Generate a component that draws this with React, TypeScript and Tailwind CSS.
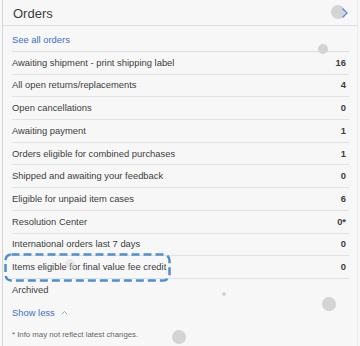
import React from "react";

const ROWS: { label: string; value: string }[] = [
  { label: "Awaiting shipment - print shipping label", value: "16" },
  { label: "All open returns/replacements", value: "4" },
  { label: "Open cancellations", value: "0" },
  { label: "Awaiting payment", value: "1" },
  { label: "Orders eligible for combined purchases", value: "1" },
  { label: "Shipped and awaiting your feedback", value: "0" },
  { label: "Eligible for unpaid item cases", value: "6" },
  { label: "Resolution Center", value: "0*" },
  { label: "International orders last 7 days", value: "0" },
  { label: "Items eligible for final value fee credit", value: "0" },
];

const Dot = ({ className }: { className: string }) => (
  <div className={`absolute rounded-full bg-[#d4d4d6] ${className}`} />
);

const App = () => {
  return (
    <div className="bg-[#f7f7f7] w-[360px] h-[346px] pl-[2px] pr-[2px]">
      <div
        className="relative h-full overflow-hidden border-l border-r border-l-[#d6d6d6] border-r-[#ececec] text-[#3d3d3d]"
        style={{ fontFamily: '"Liberation Sans", Arial, sans-serif' }}
      >
        <div className="flex items-center justify-between h-[26px] pl-[10px] pr-[8px] border-b border-[#dedede]">
          <h2 className="text-[13px] leading-none pt-[1px]">Orders</h2>
          <svg width="8" height="12" viewBox="0 0 8 12" className="relative z-10">
            <path d="M1.5 1.5 L6 6 L1.5 10.5" fill="none" stroke="#5b8fd1" strokeWidth="1.4" />
          </svg>
        </div>

        <div className="pl-[9px] pr-[8px]">
          <div className="h-[26px] flex items-center border-b border-[#dedede] pt-[3px]">
            <a className="text-[9.4px] text-[#3c6fc4]">See all orders</a>
          </div>

          {ROWS.map((row, index) => (
            <div
              key={index}
              className="h-[22.7px] flex items-center justify-between border-b border-[#e2e2e2] text-[9.4px]"
            >
              <span>{row.label}</span>
              <span className="font-bold pr-[3px]">{row.value}</span>
            </div>
          ))}

          <div className="h-[23px] flex items-center text-[9.4px]">Archived</div>

          <div className="h-[22px] flex items-center gap-[6px] text-[9.4px] text-[#3c6fc4]">
            <span>Show less</span>
            <svg width="7" height="5" viewBox="0 0 7 5">
              <path d="M1 4 L3.5 1.5 L6 4" fill="none" stroke="#9aa8c0" strokeWidth="1" />
            </svg>
          </div>

          <div className="h-[20px] flex items-center pt-[2px] text-[7.8px] text-[#666]">
            * Info may not reflect latest changes.
          </div>
        </div>

        {/* annotation around the row */}
        <svg className="absolute left-[1px] top-[253px]" width="167" height="29" viewBox="0 0 167 29">
          <rect
            x="1.5"
            y="1.5"
            width="164"
            height="26"
            rx="6"
            fill="none"
            stroke="#4d8fd4"
            strokeWidth="2.5"
            strokeDasharray="8 4"
          />
        </svg>

        <Dot className="left-[328px] top-[5px] w-[14px] h-[14px]" />
        <Dot className="left-[315px] top-[44px] w-[10px] h-[10px]" />
        <Dot className="left-[62px] top-[259px] w-[10px] h-[10px] opacity-40" />
        <Dot className="left-[219px] top-[292px] w-[4px] h-[4px]" />
        <Dot className="left-[319px] top-[297px] w-[14px] h-[14px]" />
        <Dot className="left-[169px] top-[330px] w-[14px] h-[14px]" />
      </div>
    </div>
  );
};

export default App;
